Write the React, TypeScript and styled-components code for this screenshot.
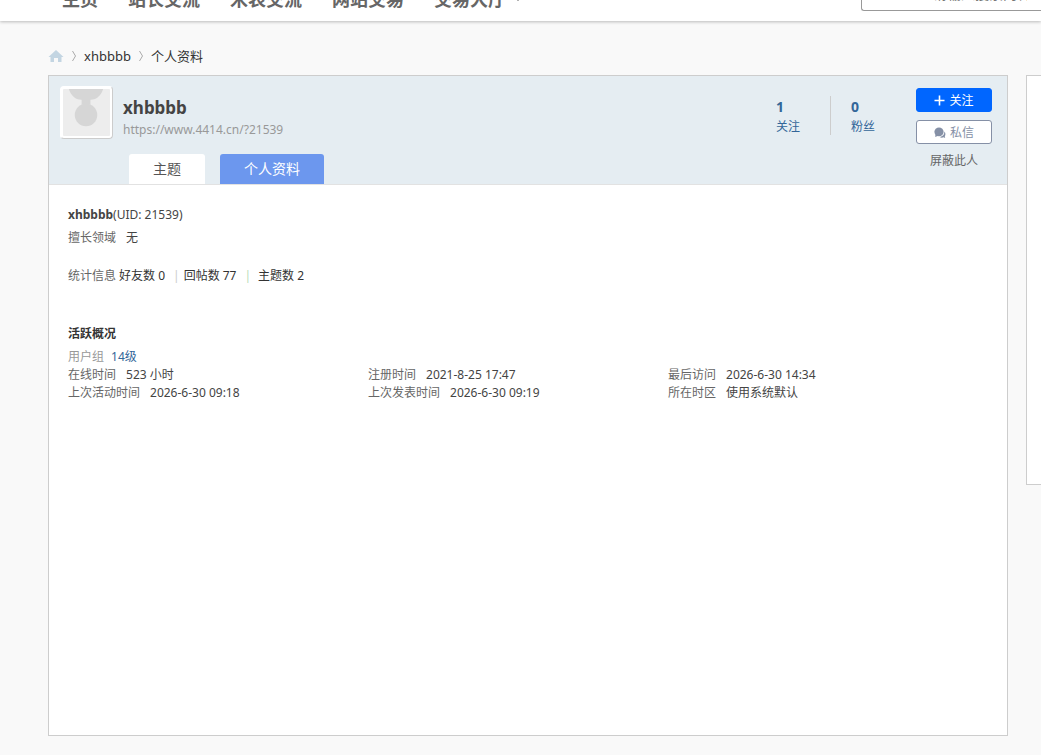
import React from "react";
import styled, { createGlobalStyle } from "styled-components";

const GlobalStyle = createGlobalStyle`
  * { box-sizing: border-box; }
  body {
    margin: 0;
    background: #f9f9f9;
    color: #444;
    font: 12px/18px "Noto Sans", "Noto Sans CJK SC", sans-serif;
    overflow: hidden;
  }
  a { color: inherit; text-decoration: none; }
  h1, h2, p, ul, ol, dl, dd { margin: 0; padding: 0; font-size: inherit; }
  ul, ol { list-style: none; }
  button, input { font: inherit; }
`;

const TopBar = styled.header`
  display: flex;
  justify-content: space-between;
  align-items: flex-end;
  height: 21px;
  padding: 0 0 10px 62px;
  background: #fff;
  box-shadow: 0 1px 3px rgba(0, 0, 0, 0.25);
`;

const Nav = styled.nav`
  display: flex;
  gap: 30px;
  color: #666;
  font-size: 18px;
  font-weight: 700;
  line-height: 24px;
`;

const NavLink = styled.a`
  display: flex;
  align-items: center;
  gap: 8px;
`;

const Caret = styled.span`
  border: 4px solid transparent;
  border-top-color: #666;
  border-bottom: 0;
`;

const SearchBox = styled.input`
  flex: none;
  width: 180px;
  height: 36px;
  padding: 0 0 0 71px;
  border: 1px solid #999;
  border-right: 0;
  border-radius: 3px 0 0 3px;
  background: #fff;
  font-size: 14px;
  &::placeholder { color: #757575; opacity: 1; }
`;

const Crumbs = styled.nav`
  display: flex;
  align-items: center;
  gap: 8px;
  height: 54px;
  padding: 16px 0 0 48px;
  color: #333;
  font-size: 13px;
`;

const HomeLink = styled.a`
  display: flex;
  width: 16px;
`;

const Columns = styled.div`
  display: grid;
  grid-template-columns: minmax(0, 1fr) 15px;
  align-items: start;
  gap: 18px;
  padding: 0 0 19px 48px;
`;

const Card = styled.main`
  min-height: 661px;
  border: 1px solid #cdcdcd;
  background: #fff;
`;

const SidePanel = styled.aside`
  min-height: 410px;
  border: 1px solid #cdcdcd;
  border-right: 0;
  background: #fff;
`;

const ProfileHead = styled.div`
  display: flex;
  justify-content: space-between;
  height: 109px;
  padding: 10px 15px 0 11px;
  border-bottom: 1px solid #e2e2e2;
  background: #e5edf2;
`;

const Identity = styled.div`
  display: flex;
  flex-direction: column;
  justify-content: space-between;
`;

const Person = styled.div`
  display: flex;
  gap: 10px;
`;

const Avatar = styled.svg`
  width: 53px;
  height: 53px;
  padding: 2px;
  border: 1px solid #fff;
  border-right-color: #ccc;
  border-bottom-color: #ccc;
  border-radius: 4px;
  background: #fff;
`;

const Names = styled.div`
  padding-top: 9px;
`;

const UserName = styled.h1`
  color: #444;
  font-size: 17px;
  line-height: 26px;
`;

const ProfileUrl = styled.a`
  display: block;
  color: #999;
`;

const Tabs = styled.ul`
  display: flex;
  gap: 15px;
  padding-left: 69px;
`;

const TabLink = styled.a<{ $active?: boolean }>`
  display: block;
  padding: 0 24px;
  border-radius: 3px 3px 0 0;
  background: ${(p) => (p.$active ? "#6c97ee" : "#fff")};
  color: ${(p) => (p.$active ? "#fff" : "#555")};
  font-size: 14px;
  line-height: 30px;
`;

const HeadRight = styled.div`
  display: flex;
  align-items: flex-start;
  gap: 41px;
`;

const Counts = styled.ul`
  display: flex;
  padding-top: 10px;
  color: #369;
`;

const Count = styled.li`
  & + & {
    margin-left: 30px;
    padding-left: 20px;
    border-left: 1px solid #cdcdcd;
  }
  a { display: block; height: 39px; }
  strong { display: block; font-size: 14px; line-height: 22px; }
`;

const Actions = styled.div`
  display: flex;
  flex-direction: column;
  gap: 8px;
  width: 76px;
  padding-top: 2px;
`;

const ActionButton = styled.button<{ $kind: "solid" | "outline" | "plain" }>`
  display: flex;
  align-items: center;
  justify-content: center;
  gap: 4px;
  height: ${(p) => (p.$kind === "plain" ? "18px" : "24px")};
  padding: ${(p) => (p.$kind === "plain" ? "0" : "1px 0 0")};
  border: ${(p) => (p.$kind === "plain" ? "0" : "1px solid")};
  border-color: ${(p) => (p.$kind === "solid" ? "#06f" : "#8590a6")};
  border-radius: 3px;
  background: ${(p) => ({ solid: "#06f", outline: "#fff", plain: "none" })[p.$kind]};
  color: ${(p) => ({ solid: "#fff", outline: "#8590a6", plain: "#666" })[p.$kind]};
`;

const Details = styled.div`
  padding: 20px 19px;
`;

const Line = styled.p`
  line-height: 20px;
`;

const Field = styled.div`
  display: flex;
  gap: 10px;
  dt { color: #666; }
  dd { color: #444; }
`;

const Expertise = styled.dl`
  padding-top: 4px;
`;

const Stats = styled.div`
  display: flex;
  gap: 3px;
  padding-top: 20px;
  color: #666;
  ul { display: flex; color: #333; }
  li + li::before { content: "|"; }
  li:nth-child(2)::before { margin: 0 4px 0 8px; color: #ccc; }
  li:nth-child(3)::before { margin: 0 7px 0 8px; color: #b9dcb9; }
`;

const SectionTitle = styled.h2`
  padding-top: 40px;
  color: #333;
`;

const Group = styled.p`
  display: flex;
  gap: 7px;
  padding-top: 5px;
  color: #999;
  a { color: #369; }
`;

const Times = styled.dl`
  display: grid;
  grid-template-columns: 300px 300px auto;
`;

const times = [
  ["在线时间", "523 小时"],
  ["注册时间", "2021-8-25 17:47"],
  ["最后访问", "2026-6-30 14:34"],
  ["上次活动时间", "2026-6-30 09:18"],
  ["上次发表时间", "2026-6-30 09:19"],
  ["所在时区", "使用系统默认"],
];

function Chevron() {
  return (
    <svg width="4" height="12" viewBox="0 0 4 12" fill="none" stroke="#aaa" aria-hidden="true">
      <path d="M.5 1l3 5-3 5" />
    </svg>
  );
}

export default function App() {
  return (
    <>
      <GlobalStyle />
      <TopBar>
        <Nav>
          <NavLink href="#">主页</NavLink>
          <NavLink href="#">站长交流</NavLink>
          <NavLink href="#">米表交流</NavLink>
          <NavLink href="#">网站交易</NavLink>
          <NavLink href="#">交易大厅<Caret /></NavLink>
        </Nav>
        <SearchBox type="search" aria-label="搜索" placeholder="请输入搜索内容" />
      </TopBar>

      <Crumbs aria-label="breadcrumb">
        <HomeLink href="#" aria-label="主页">
          <svg width="16" height="14" viewBox="0 0 16 14" fill="#c3d5e2">
            <path d="M8 1L15.500 8H13.500V13H10V9H6V13H2.500V8H.5z" />
          </svg>
        </HomeLink>
        <Chevron />
        <a href="#">xhbbbb</a>
        <Chevron />
        <a href="#">个人资料</a>
      </Crumbs>

      <Columns>
        <Card>
          <ProfileHead>
            <Identity>
              <Person>
                <Avatar viewBox="0 0 48 48" role="img" aria-label="xhbbbb">
                  <rect width="48" height="48" fill="#ededed" />
                  <path d="M6 0h35c-2 6-6 11-13 11v5h-9v-5C12 11 8 6 6 0z" fill="#d6d6d6" />
                  <ellipse cx="23.500" cy="26.500" rx="11.500" ry="11.500" fill="#d6d6d6" />
                </Avatar>
                <Names>
                  <UserName>xhbbbb</UserName>
                  <ProfileUrl href="#">https://www.4414.cn/?21539</ProfileUrl>
                </Names>
              </Person>
              <Tabs>
                <li><TabLink href="#">主题</TabLink></li>
                <li><TabLink href="#" $active>个人资料</TabLink></li>
              </Tabs>
            </Identity>
            <HeadRight>
              <Counts>
                <Count><a href="#"><strong>1</strong>关注</a></Count>
                <Count><a href="#"><strong>0</strong>粉丝</a></Count>
              </Counts>
              <Actions>
                <ActionButton $kind="solid">
                  <svg width="11" height="12" viewBox="0 0 11 12" stroke="#fff" strokeWidth="1.600" aria-hidden="true">
                    <path d="M5.500 .5v10M.5 5.500h10" />
                  </svg>
                  关注
                </ActionButton>
                <ActionButton $kind="outline">
                  <svg width="12" height="12" viewBox="0 0 12 12" fill="#8590a6" aria-hidden="true">
                    <ellipse cx="5" cy="4.800" rx="4.600" ry="4.400" />
                    <path d="M1.500 7L1.200 10l3-1.200z" />
                    <path d="M10.300 4.600c.3 2.900-1.600 5-4.600 5.400 1.200.8 2.700.8 3.800.3l1.700.6-.4-1.500c1-1.500.8-3.500-.5-4.800z" />
                  </svg>
                  私信
                </ActionButton>
                <ActionButton $kind="plain">屏蔽此人</ActionButton>
              </Actions>
            </HeadRight>
          </ProfileHead>

          <Details>
            <Line><strong>xhbbbb</strong>(UID: 21539)</Line>
            <Expertise>
              <Field><dt>擅长领域</dt><dd>无</dd></Field>
            </Expertise>
            <Stats>
              统计信息
              <ul>
                <li><a href="#">好友数 0</a></li>
                <li><a href="#">回帖数 77</a></li>
                <li><a href="#">主题数 2</a></li>
              </ul>
            </Stats>
            <SectionTitle>活跃概况</SectionTitle>
            <Group>用户组 <a href="#">14级</a></Group>
            <Times>
              {times.map(([label, value]) => (
                <Field key={label}><dt>{label}</dt><dd>{value}</dd></Field>
              ))}
            </Times>
          </Details>
        </Card>
        <SidePanel />
      </Columns>
    </>
  );
}
